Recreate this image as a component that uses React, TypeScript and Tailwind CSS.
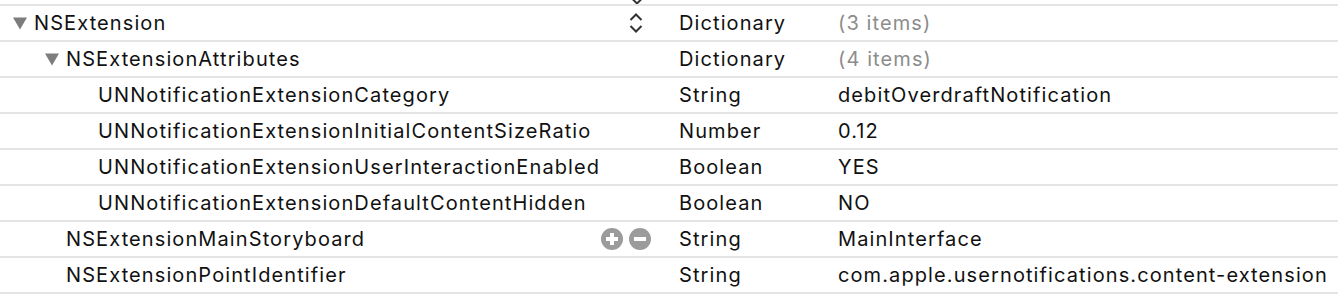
import type { ReactNode } from 'react'

type Row = {
  key: string
  level: number
  open?: boolean
  type: string
  value: string
  muted?: boolean
  controls?: 'stepper' | 'plusminus'
}

const rows: Row[] = [
  { key: 'NSExtension', level: 0, open: true, type: 'Dictionary', value: '(3 items)', muted: true, controls: 'stepper' },
  { key: 'NSExtensionAttributes', level: 1, open: true, type: 'Dictionary', value: '(4 items)', muted: true },
  { key: 'UNNotificationExtensionCategory', level: 2, type: 'String', value: 'debitOverdraftNotification' },
  { key: 'UNNotificationExtensionInitialContentSizeRatio', level: 2, type: 'Number', value: '0.12' },
  { key: 'UNNotificationExtensionUserInteractionEnabled', level: 2, type: 'Boolean', value: 'YES' },
  { key: 'UNNotificationExtensionDefaultContentHidden', level: 2, type: 'Boolean', value: 'NO' },
  { key: 'NSExtensionMainStoryboard', level: 1, type: 'String', value: 'MainInterface', controls: 'plusminus' },
  { key: 'NSExtensionPointIdentifier', level: 1, type: 'String', value: 'com.apple.usernotifications.content-extension' },
]

const indent = ['pl-[12px]', 'pl-[44px]', 'pl-[98px]']

function Disclosure() {
  return (
    <svg width="16" height="14" viewBox="0 0 16 14" className="mr-[6px] shrink-0">
      <path d="M1 1.5 H15 L8 13.5 Z" fill="#7d7d7d" />
    </svg>
  )
}

function Stepper() {
  return (
    <svg width="18" height="22" viewBox="0 0 18 22" className="mr-[6px]">
      <path d="M3.5 8 L9 2.5 L14.5 8" fill="none" stroke="#333" strokeWidth="2" />
      <path d="M3.5 14 L9 19.5 L14.5 14" fill="none" stroke="#333" strokeWidth="2" />
    </svg>
  )
}

function RoundButton({ plus }: { plus?: boolean }) {
  return (
    <svg width="22" height="22" viewBox="0 0 22 22">
      <circle cx="11" cy="11" r="11" fill="#9b9b9b" />
      <rect x="5" y="9" width="12" height="4" fill="#fff" />
      {plus && <rect x="9" y="5" width="4" height="12" fill="#fff" />}
    </svg>
  )
}

function Cell({ children, className }: { children: ReactNode; className?: string }) {
  return <div className={`flex h-[34px] items-center whitespace-nowrap ${className ?? ''}`}>{children}</div>
}

export default function App() {
  return (
    <div className="h-[298px] w-[1338px] overflow-hidden bg-white text-[20px] leading-none tracking-[1.1px] text-[#111] [font-family:Inter,'Liberation_Sans',sans-serif]">
      <div className="flex h-[4px] items-end justify-end overflow-hidden pr-[692px]">
        <svg width="18" height="4" viewBox="0 16 18 4">
          <path d="M3.5 14 L9 19.5 L14.5 14" fill="none" stroke="#333" strokeWidth="2" />
        </svg>
      </div>
      <div className="border-b-2 border-[#e4e4e4]">
        {rows.map((r) => (
          <div key={r.key} className="grid grid-cols-[679px_159px_1fr] border-t-2 border-[#e4e4e4]">
            <Cell className={`${r.open ? indent[r.level] : r.level === 1 ? 'pl-[66px]' : indent[r.level]} pr-[28px]`}>
              {r.open && <Disclosure />}
              <span>{r.key}</span>
              {r.controls === 'stepper' && (
                <div className="ml-auto flex items-center">
                  <Stepper />
                </div>
              )}
              {r.controls === 'plusminus' && (
                <div className="ml-auto flex items-center gap-[6px]">
                  <RoundButton plus />
                  <RoundButton />
                </div>
              )}
            </Cell>
            <Cell>{r.type}</Cell>
            <Cell className={r.muted ? 'text-[#8c8c8c]' : ''}>{r.value}</Cell>
          </div>
        ))}
      </div>
    </div>
  )
}
